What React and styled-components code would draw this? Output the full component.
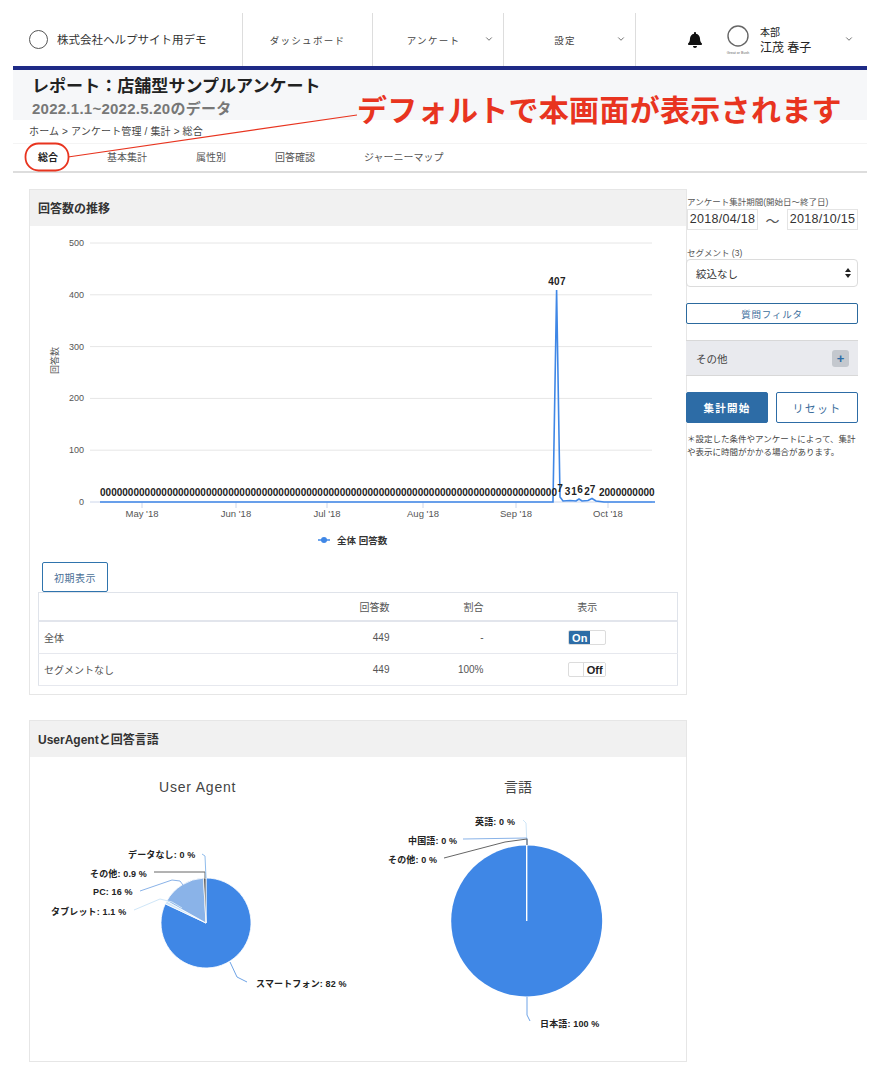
import styled, { createGlobalStyle } from "styled-components";
import { FaBell } from "react-icons/fa";
import { ChevronDown } from "lucide-react";

const GlobalStyle = createGlobalStyle`
    html, body {
        margin: 0;
        padding: 0;
        background: #fff;
        font-family: "Liberation Sans", "Noto Sans CJK JP", sans-serif;
        color: #333;
    }
`;

// ===== Page =====
const Page = styled.div`
    position: relative;
    width: 880px;
    height: 1082px;
    overflow: hidden;
    padding: 13px 13px 0;
    box-sizing: border-box;
`;

// ===== Header =====
const Nav = styled.nav`
    display: grid;
    grid-template-columns: 229px 130px 131px 132px 1fr;
    height: 53px;
`;

const Brand = styled.div`
    display: flex;
    align-items: center;
    gap: 9px;
    padding: 0 0 1px 16px;
    font-size: 11.5px;
    color: #333;
`;

const Ring = styled.span`
    width: 17px;
    height: 17px;
    border: 1.5px solid #555;
    border-radius: 50%;
`;

const NavItem = styled.div`
    position: relative;
    display: flex;
    align-items: center;
    justify-content: center;
    padding-right: ${(p) => (p.$menu ? "9px" : 0)};
    border-left: 1px solid #ddd;
    font-size: 9.5px;
    letter-spacing: 1.3px;
    color: #444;
    svg {
        position: absolute;
        right: 9px;
        top: 21px;
        color: #555;
    }
`;

const UserArea = styled.div`
    position: relative;
    display: flex;
    align-items: center;
    border-left: 1px solid #ddd;
    padding-left: 51px;
    > svg:last-child {
        position: absolute;
        right: 13px;
        top: 21px;
        color: #555;
    }
`;

const Bell = styled(FaBell)`
    font-size: 16px;
    color: #111;
    margin-right: 21px;
`;

const UserText = styled.div`
    margin-left: 8px;
    padding-top: 3px;
    color: #222;
`;

const UserDept = styled.div`
    font-size: 10px;
    line-height: 15px;
`;

const UserName = styled.div`
    font-size: 12px;
    line-height: 17px;
`;

const Bar = styled.div`
    height: 4px;
    background: #1e2a86;
`;

// ===== Title =====
const TitleBand = styled.div`
    height: 50px;
    background: #f6f7f9;
    padding-left: 20px;
    overflow: hidden;
`;

const Title = styled.h1`
    margin: 5px 0 0 -1px;
    font-size: 17px;
    line-height: 24px;
    font-weight: 700;
    letter-spacing: 0.05px;
    color: #222;
`;

const SubTitle = styled.div`
    margin-left: -1px;
    font-size: 15px;
    line-height: 19px;
    font-weight: 700;
    letter-spacing: 0.25px;
    color: #777;
`;

const Crumbs = styled.div`
    height: 23px;
    padding-left: 16px;
    font-size: 10px;
    line-height: 23px;
    letter-spacing: 0.15px;
    color: #444;
`;

const Tabs = styled.div`
    display: flex;
    align-items: center;
    gap: 49px;
    height: 25px;
    padding: 0 0 2px 25px;
    border-top: 1px solid #f4f4f4;
    border-bottom: 2px solid #ddd;
`;

const Tab = styled.span`
    font-size: 10px;
    font-weight: ${(p) => (p.$active ? 700 : 400)};
    color: ${(p) => (p.$active ? "#222" : "#555")};
`;

// ===== Annotation overlay =====
const Callout = styled.div`
    position: absolute;
    left: 357px;
    top: 90px;
    font-size: 30px;
    line-height: 42px;
    font-weight: 700;
    letter-spacing: 0.3px;
    white-space: nowrap;
    color: #e8341f;
`;

const CalloutMarks = styled.svg`
    position: absolute;
    left: 0;
    top: 0;
    pointer-events: none;
`;

// ===== Main layout =====
const Content = styled.div`
    display: grid;
    grid-template-columns: 658px 172px;
    margin-top: 16px;
    padding-left: 16px;
`;

const Column = styled.div`
    display: flex;
    flex-direction: column;
    gap: 25px;
`;

const Card = styled.section`
    border: 1px solid #e6e6e6;
    background: #fff;
`;

const CardHead = styled.h2`
    margin: 0;
    height: 36px;
    padding-left: 8px;
    background: #f1f1f1;
    font-size: 12px;
    line-height: 38px;
    font-weight: 700;
    color: #333;
`;

const Chart = styled.svg`
    display: block;
    margin-left: 8px;
`;

const CardBody = styled.div`
    padding: 0 8px 8px;
`;

const ResetView = styled.button`
    display: block;
    width: 66px;
    height: 30px;
    margin-left: 4px;
    padding: 0;
    border: 1px solid #2f74ad;
    border-radius: 2px;
    background: #fff;
    font: inherit;
    font-size: 10px;
    letter-spacing: 0.5px;
    color: #4a6f96;
`;

const Table = styled.table`
    width: 639px;
    border-collapse: collapse;
    border: 1px solid #dfe3ea;
    table-layout: fixed;
    font-size: 10px;
    color: #555;
    th, td {
        padding: 0;
        font-weight: 400;
        height: 31px;
        border-bottom: 1px solid #e6e8ee;
    }
    thead th {
        height: 27px;
        border-bottom: 2px solid #e2e5ec;
    }
`;

const Cell = styled.td`
    text-align: ${(p) => p.$align || "left"};
    padding-left: ${(p) => p.$pad || (p.$align ? 0 : "5px")} !important;
`;

const HeadCell = styled.th`
    text-align: ${(p) => p.$align || "left"};
    padding-left: ${(p) => p.$pad || 0} !important;
`;

const Toggle = styled.span`
    display: inline-flex;
    vertical-align: middle;
    width: 38px;
    height: 15px;
    border: 1px solid #dcdcdc;
    border-radius: 2px;
    box-sizing: border-box;
    overflow: hidden;
    justify-content: ${(p) => (p.$on ? "flex-start" : "flex-end")};
`;

const ToggleLabel = styled.span`
    width: 21px;
    text-align: center;
    font-size: 11px;
    line-height: 14px;
    font-weight: 700;
    color: ${(p) => (p.$on ? "#fff" : "#222")};
    background: ${(p) => (p.$on ? "#2d6ca6" : "#fff")};
    border-left: ${(p) => (p.$on ? "none" : "1px solid #dcdcdc")};
`;

// ===== Sidebar =====
const Side = styled.aside`
    display: flex;
    flex-direction: column;
    align-items: stretch;
    width: 172px;
    margin-left: -1px;
    padding-top: 7px;
`;

const FieldLabel = styled.div`
    font-size: 8.5px;
    line-height: 12px;
    padding-left: 1px;
    color: #555;
    white-space: nowrap;
`;

const DateRow = styled.div`
    display: flex;
    align-items: center;
    justify-content: space-between;
    margin: 1px 0 17px 1px;
    font-size: 14px;
    color: #555;
`;

const DateBox = styled.div`
    width: 71px;
    height: 21px;
    box-sizing: border-box;
    border: 1px solid #e4e4e4;
    font-size: 12.5px;
    line-height: 19px;
    letter-spacing: 0.3px;
    text-align: center;
    color: #333;
`;

const SelectBox = styled.div`
    display: flex;
    align-items: center;
    justify-content: space-between;
    height: 26px;
    padding: 0 5px 0 9px;
    border: 1px solid #dcdcdc;
    border-radius: 4px;
    font-size: 10.5px;
    color: #333;
`;

const FilterButton = styled.button`
    height: 21px;
    margin-top: 16px;
    padding: 0;
    border: 1px solid #2c6a9e;
    border-radius: 2px;
    background: #fff;
    font: inherit;
    font-size: 9.5px;
    letter-spacing: 0.8px;
    color: #3c6e9c;
`;

const OtherPanel = styled.div`
    display: flex;
    align-items: center;
    justify-content: space-between;
    height: 34px;
    margin-top: 16px;
    padding: 0 9px 0 10px;
    background: #e9eaee;
    border-top: 1px solid #d8d8d8;
    border-bottom: 1px solid #d8d8d8;
    font-size: 10.5px;
    color: #444;
`;

const PlusBox = styled.span`
    width: 17px;
    height: 17px;
    border-radius: 3px;
    background: #c4c8ce;
    font-size: 13px;
    line-height: 17px;
    font-weight: 700;
    text-align: center;
    color: #2d6ca6;
`;

const ActionRow = styled.div`
    display: flex;
    gap: 8px;
    margin-top: 16px;
`;

const Action = styled.button`
    flex: 1;
    height: 31px;
    padding: 0;
    border: 1px solid #2d6ca6;
    border-radius: 2px;
    background: ${(p) => (p.$primary ? "#2d6ca6" : "#fff")};
    font: inherit;
    font-size: ${(p) => (p.$primary ? "10.5px" : "11px")};
    font-weight: ${(p) => (p.$primary ? 700 : 400)};
    letter-spacing: 1.3px;
    color: ${(p) => (p.$primary ? "#fff" : "#3c6e9c")};
`;

const Note = styled.p`
    margin: 10px 0 0 1px;
    font-size: 8.5px;
    line-height: 13px;
    color: #444;
`;

// ===== Chart data =====
const gridLines = [
    [500, 243],
    [400, 294.8],
    [300, 346.6],
    [200, 398.4],
    [100, 450.2],
    [0, 502],
];

const months = [
    ["May '18", 142],
    ["Jun '18", 236],
    ["Jul '18", 327],
    ["Aug '18", 423],
    ["Sep '18", 516],
    ["Oct '18", 608],
];

const smallLabels = [
    ["7", 560, 492],
    ["3", 567.5, 495],
    ["1", 574, 495],
    ["6", 580, 493],
    ["2", 587, 494.5],
    ["7", 592.5, 493],
];

const ChartText = styled.text`
    font-family: "Liberation Sans", "Noto Sans CJK JP", sans-serif;
    font-size: ${(p) => p.$size || 9}px;
    font-weight: ${(p) => (p.$bold ? 700 : 400)};
    fill: ${(p) => p.$fill || "#222"};
    letter-spacing: ${(p) => p.$spacing || 0}px;
`;

function polar(cx, cy, r, deg) {
    const a = ((deg - 90) * Math.PI) / 180;
    return [cx + r * Math.cos(a), cy + r * Math.sin(a)];
}

function slice(cx, cy, r, from, to) {
    const [x1, y1] = polar(cx, cy, r, from);
    const [x2, y2] = polar(cx, cy, r, to);
    const large = to - from > 180 ? 1 : 0;
    return `M${cx} ${cy}L${x1} ${y1}A${r} ${r} 0 ${large} 1 ${x2} ${y2}Z`;
}

const agentSlices = [
    [0, 295.2, "#3f87e6"],
    [295.2, 299.2, "#cfe6f8"],
    [299.2, 356.8, "#8ab3e8"],
    [356.8, 360, "#555"],
];

const agentLeaders = [
    ["230,962 237,977 247,982", "#6ea3e6"],
    ["134,910 160,899 172,902 182,908", "#cfe6f8"],
    ["140,891 172,880 180,881 183,885", "#8ab3e8"],
    ["154,872 205,872 205,878", "#666"],
    ["202,854 205,856 206,878", "#8fbcec"],
];

const langLeaders = [
    ["527,997 527,1015 530,1021", "#6ea3e6"],
    ["523,820 526,823 527,845", "#cfe6f8"],
    ["463,839 527,838 527,845", "#8ab3e8"],
    ["444,858 505,842 527,839 527,845", "#666"],
];

const pieLabels = [
    ["データなし: 0 %", 128, 858],
    ["その他: 0.9 %", 90, 877],
    ["PC: 16 %", 93, 895],
    ["タブレット: 1.1 %", 51, 915],
    ["スマートフォン: 82 %", 256, 987],
    ["英語: 0 %", 475, 825],
    ["中国語: 0 %", 408, 844],
    ["その他: 0 %", 388, 863],
    ["日本語: 100 %", 540, 1027],
];

function TrendChart() {
    return (
        <Chart width="640" height="336" viewBox="38 226 640 336">
            {gridLines.map(([value, y]) => (
                <g key={value}>
                    {value > 0 && (
                        <line x1="90" x2="652" y1={y} y2={y} stroke="#e6e6e6" />
                    )}
                    <ChartText x="84" y={y + 3} textAnchor="end" $fill="#555">
                        {value}
                    </ChartText>
                </g>
            ))}
            <line x1="90" x2="652" y1="502" y2="502" stroke="#ccd6eb" />
            {months.map(([name, x]) => (
                <g key={name}>
                    <line x1={x} x2={x} y1="502" y2="508" stroke="#ccd6eb" />
                    <ChartText x={x} y="517" textAnchor="middle" $fill="#555" $size={9.5}>
                        {name}
                    </ChartText>
                </g>
            ))}
            <ChartText
                x="58"
                y="374"
                $fill="#555"
                transform="rotate(-90 58 374)"
            >
                回答数
            </ChartText>
            <polyline
                fill="none"
                stroke="#3f87e6"
                strokeWidth="1.6"
                points="100,502 553,502 556.6,290 560,497 563,501 570,500.5 576,501 579,499 582,501 588,500.5 592,498.5 596,501 604,502 655,502"
            />
            <ChartText
                x="100"
                y="496"
                $size={10}
                $bold
                textLength="457"
                lengthAdjust="spacing"
            >
                {"0".repeat(82)}
            </ChartText>
            {smallLabels.map(([digit, x, y], i) => (
                <ChartText key={i} x={x} y={y} $size={10} $bold textAnchor="middle">
                    {digit}
                </ChartText>
            ))}
            <ChartText x="599" y="496" $size={10} $bold>
                2000000000
            </ChartText>
            <ChartText x="557" y="285" $size={10} $bold textAnchor="middle" $spacing={0.3}>
                407
            </ChartText>
            <line x1="318" x2="330" y1="540" y2="540" stroke="#3f87e6" strokeWidth="1.5" />
            <circle cx="324" cy="540" r="3" fill="#3f87e6" />
            <ChartText x="337" y="544" $size={9.5} $bold $fill="#333">
                全体 回答数
            </ChartText>
        </Chart>
    );
}

function PieCharts() {
    return (
        <Chart width="648" height="304" viewBox="38 757 648 304">
            <ChartText x="159" y="792" $size={14} $spacing={0.8} $fill="#444">
                User Agent
            </ChartText>
            <ChartText x="504" y="792" $size={14} $fill="#444">
                言語
            </ChartText>
            {agentSlices.map(([from, to, color]) => (
                <path
                    key={from}
                    d={slice(206, 923, 45, from, to)}
                    fill={color}
                    stroke="#fff"
                    strokeWidth="0.8"
                />
            ))}
            <circle cx="526.7" cy="921" r="75.5" fill="#3f87e6" />
            <line x1="526.7" x2="526.7" y1="845" y2="921" stroke="#fff" strokeWidth="1.4" />
            {[...agentLeaders, ...langLeaders].map(([points, color]) => (
                <polyline key={points} points={points} fill="none" stroke={color} />
            ))}
            {pieLabels.map(([text, x, y]) => (
                <ChartText key={text + x} x={x} y={y} $bold $size={9} $spacing={0.15}>
                    {text}
                </ChartText>
            ))}
        </Chart>
    );
}

function Avatar() {
    return (
        <svg width="28" height="34" viewBox="0 0 28 34">
            <circle cx="14" cy="13" r="10" fill="none" stroke="#666" strokeWidth="1.4" />
            <text
                x="14"
                y="31"
                textAnchor="middle"
                fontSize="3.6"
                fontFamily="Liberation Sans, sans-serif"
                fill="#666"
            >
                Great or Bush
            </text>
        </svg>
    );
}

function UpDown() {
    return (
        <svg width="8" height="12" viewBox="0 0 8 12">
            <path d="M4 1 7 5H1ZM4 11 1 7H7Z" fill="#222" />
        </svg>
    );
}

function App() {
    return (
        <>
            <GlobalStyle />
            <Page>
                <Nav>
                    <Brand>
                        <Ring />
                        株式会社ヘルプサイト用デモ
                    </Brand>
                    <NavItem>ダッシュボード</NavItem>
                    <NavItem $menu>
                        アンケート
                        <ChevronDown size={10} />
                    </NavItem>
                    <NavItem $menu>
                        設定
                        <ChevronDown size={10} />
                    </NavItem>
                    <UserArea>
                        <Bell />
                        <Avatar />
                        <UserText>
                            <UserDept>本部</UserDept>
                            <UserName>江茂 春子</UserName>
                        </UserText>
                        <ChevronDown size={10} />
                    </UserArea>
                </Nav>
                <Bar />
                <TitleBand>
                    <Title>レポート：店舗型サンプルアンケート</Title>
                    <SubTitle>2022.1.1~2022.5.20のデータ</SubTitle>
                </TitleBand>
                <Crumbs>ホーム &gt; アンケート管理 / 集計 &gt; 総合</Crumbs>
                <Tabs>
                    <Tab $active>総合</Tab>
                    <Tab>基本集計</Tab>
                    <Tab>属性別</Tab>
                    <Tab>回答確認</Tab>
                    <Tab>ジャーニーマップ</Tab>
                </Tabs>

                <Content>
                    <Column>
                        <Card>
                            <CardHead>回答数の推移</CardHead>
                            <TrendChart />
                            <CardBody>
                                <ResetView>初期表示</ResetView>
                                <Table>
                                    <colgroup>
                                        <col width="250" />
                                        <col width="101" />
                                        <col width="94" />
                                        <col width="194" />
                                    </colgroup>
                                    <thead>
                                        <tr>
                                            <HeadCell />
                                            <HeadCell $align="right">回答数</HeadCell>
                                            <HeadCell $align="right">割合</HeadCell>
                                            <HeadCell $align="center" $pad="14px">表示</HeadCell>
                                        </tr>
                                    </thead>
                                    <tbody>
                                        <tr>
                                            <Cell>全体</Cell>
                                            <Cell $align="right">449</Cell>
                                            <Cell $align="right">-</Cell>
                                            <Cell $align="center" $pad="14px">
                                                <Toggle $on>
                                                    <ToggleLabel $on>On</ToggleLabel>
                                                </Toggle>
                                            </Cell>
                                        </tr>
                                        <tr>
                                            <Cell>セグメントなし</Cell>
                                            <Cell $align="right">449</Cell>
                                            <Cell $align="right">100%</Cell>
                                            <Cell $align="center" $pad="14px">
                                                <Toggle>
                                                    <ToggleLabel>Off</ToggleLabel>
                                                </Toggle>
                                            </Cell>
                                        </tr>
                                    </tbody>
                                </Table>
                            </CardBody>
                        </Card>
                        <Card>
                            <CardHead>UserAgentと回答言語</CardHead>
                            <PieCharts />
                        </Card>
                    </Column>
                    <Side>
                        <FieldLabel>アンケート集計期間(開始日〜終了日)</FieldLabel>
                        <DateRow>
                            <DateBox>2018/04/18</DateBox>
                            〜
                            <DateBox>2018/10/15</DateBox>
                        </DateRow>
                        <FieldLabel>セグメント (3)</FieldLabel>
                        <SelectBox>
                            絞込なし
                            <UpDown />
                        </SelectBox>
                        <FilterButton>質問フィルタ</FilterButton>
                        <OtherPanel>
                            その他
                            <PlusBox>+</PlusBox>
                        </OtherPanel>
                        <ActionRow>
                            <Action $primary>集計開始</Action>
                            <Action>リセット</Action>
                        </ActionRow>
                        <Note>
                            ＊設定した条件やアンケートによって、集計や表示に時間がかかる場合があります。
                        </Note>
                    </Side>
                </Content>

                <Callout>デフォルトで本画面が表示されます</Callout>
                <CalloutMarks width="880" height="200">
                    <line x1="68" y1="157" x2="357" y2="115" stroke="#e8341f" strokeWidth="1.2" />
                    <rect x="25.5" y="143.5" width="43" height="27" rx="13" fill="none" stroke="#e8341f" strokeWidth="1.8" />
                </CalloutMarks>
            </Page>
        </>
    );
}

export default App;
